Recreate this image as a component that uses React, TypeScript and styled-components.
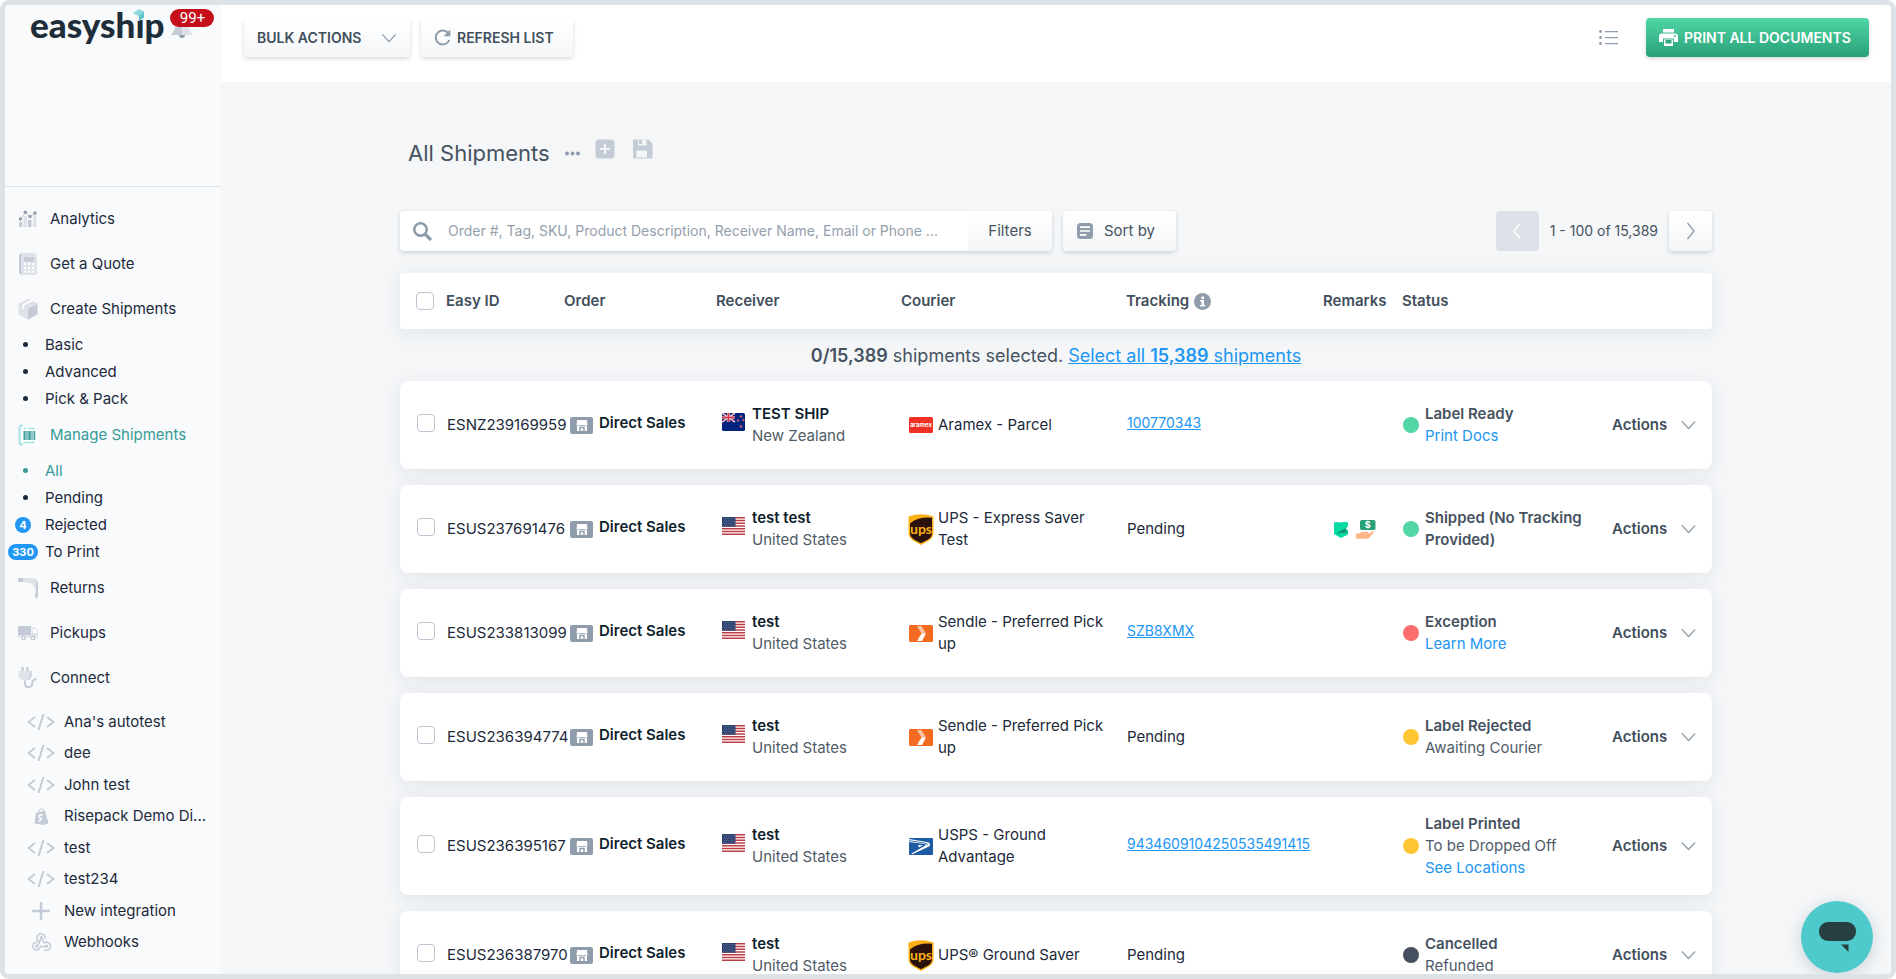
import React from "react";
import styled, { createGlobalStyle, css } from "styled-components";

const GlobalStyle = createGlobalStyle`
  *, *::before, *::after { box-sizing: border-box; }
  body {
    margin: 0;
    background: #ffffff;
    color: #1c2a3a;
    font-family: Inter, "Liberation Sans", sans-serif;
    font-size: 15px;
    line-height: 22px;
  }
  button, input { font: inherit; color: inherit; }
  a { color: inherit; text-decoration: none; }
  ul { list-style: none; margin: 0; padding: 0; }
  svg { display: block; flex: none; }
`;

/* ---------- shell ---------- */

const Frame = styled.div`
  position: relative;
  display: flex;
  height: 100vh;
  overflow: hidden;
  border: 5px solid #dde2e6;
  border-radius: 9px;
  background: #f4f6f8;
`;

const Sidebar = styled.aside`
  flex: none;
  width: 216px;
  background: #f9fafc;
`;

const Brand = styled.div`
  display: flex;
  gap: 7px;
  height: 75px;
  padding: 1px 0 0 25px;
`;

const LogoLink = styled.a`
  position: relative;
  height: 36px;
  color: #1d2d3a;
  font-family: Lato, sans-serif;
  font-size: 35px;
  font-weight: 900;
  line-height: 36px;

  svg {
    position: absolute;
    top: 3px;
    right: 19px;
  }
`;

const BellButton = styled.button`
  position: relative;
  width: 22px;
  height: 22px;
  margin-top: 12px;
  padding: 0;
  border: 0;
  background: none;
`;

const AlertCount = styled.span`
  position: absolute;
  top: -9px;
  left: -1px;
  width: 44px;
  height: 18px;
  border-radius: 9px;
  background: #c5101c;
  color: #ffffff;
  font-family: Roboto, sans-serif;
  font-size: 15px;
  line-height: 18px;
`;

const CompanyLogo = styled.div`
  width: 106px;
  height: 93px;
  margin: 0 0 13px 28px;
  background: #fafafa;
`;

const Nav = styled.nav`
  padding-top: 9px;
  border-top: 1px solid #dce1e6;
`;

const NavLink = styled.a<{ $active?: boolean }>`
  display: flex;
  align-items: center;
  gap: 12px;
  height: 45px;
  padding-left: 13px;
  color: ${(p) => (p.$active ? "#379a98" : "inherit")};
`;

const SubLink = styled.a<{ $active?: boolean }>`
  display: flex;
  align-items: center;
  gap: 4px;
  height: 27px;
  color: ${(p) => (p.$active ? "#379a98" : "inherit")};
`;

const Marker = styled.span`
  display: flex;
  justify-content: center;
  width: 36px;
`;

const Dot = styled.span`
  width: 5px;
  height: 5px;
  margin-left: 4px;
  border-radius: 50%;
  background: currentColor;
`;

const CountPill = styled.span`
  min-width: 16px;
  height: 16px;
  padding: 0 4px;
  border-radius: 8px;
  background: #2196f3;
  color: #ffffff;
  font-size: 11px;
  font-weight: 700;
  line-height: 16px;
  text-align: center;
`;

const Integrations = styled.ul`
  display: grid;
  grid-auto-rows: 1fr;
  height: 252px;
  margin-top: 6px;
`;

const IntegrationLink = styled.a`
  display: flex;
  align-items: center;
  gap: 9px;
  height: 100%;
  padding-left: 22px;
  white-space: nowrap;
`;

const IntegrationIcon = styled.span`
  display: flex;
  justify-content: center;
  width: 28px;
`;

const Page = styled.div`
  display: flex;
  flex: 1;
  flex-direction: column;
  min-width: 0;
`;

/* ---------- top bar ---------- */

const raised = css`
  border: 0;
  border-radius: 4px;
  background: linear-gradient(#ffffff, #f4f6f8);
  box-shadow: 0 2px 4px rgba(50, 75, 95, 0.2);
  cursor: pointer;
`;

const TopBar = styled.header`
  display: flex;
  flex: none;
  gap: 11px;
  height: 77px;
  padding: 13px 22px 0 23px;
  background: #ffffff;
`;

const BarButton = styled.button<{ $primary?: boolean; $between?: boolean }>`
  ${raised}
  display: flex;
  align-items: center;
  justify-content: ${(p) => (p.$between ? "space-between" : "flex-start")};
  gap: 6px;
  min-width: ${(p) => (p.$between ? "166px" : "152px")};
  height: 39px;
  padding: 0 13px;
  color: #424f5c;
  font-size: 14px;
  font-weight: 600;
  text-transform: uppercase;
  ${(p) =>
    p.$primary &&
    css`
      min-width: 223px;
      background: linear-gradient(#50d6a5, #2aa079);
      color: #ffffff;
    `}
`;

const Spacer = styled.div`
  flex: 1;
`;

const PlainButton = styled.button`
  display: flex;
  align-items: center;
  padding: 0;
  border: 0;
  background: none;
  cursor: pointer;
`;

const ListToggle = styled(PlainButton)`
  height: 38px;
  margin-right: 17px;
`;

/* ---------- content ---------- */

const Main = styled.main`
  width: 100%;
  max-width: 1312px;
  margin: 0 auto;
  padding-top: 55px;
`;

const TitleRow = styled.div`
  display: flex;
  align-items: center;
  gap: 15px;
  height: 32px;
  margin-bottom: 42px;
  padding-left: 8px;
`;

const Title = styled.h1`
  margin: 0;
  color: #465260;
  font-size: 22px;
  font-weight: 400;
  line-height: 32px;
`;

const ViewActions = styled.div`
  display: flex;
  gap: 18px;
  padding-bottom: 9px;
`;

const Tools = styled.div`
  display: flex;
  align-items: center;
  margin-bottom: 22px;
  color: #465260;
`;

const SearchGroup = styled.div`
  display: flex;
  flex: 0 1 652px;
  height: 40px;
  margin-right: 11px;
  border-radius: 4px;
  background: #ffffff;
  box-shadow: 0 2px 4px rgba(50, 75, 95, 0.2);
  overflow: hidden;
`;

const SearchField = styled.label`
  display: flex;
  flex: 1;
  align-items: center;
  gap: 16px;
  padding-left: 13px;
`;

const SearchInput = styled.input`
  flex: 1;
  min-width: 0;
  padding: 0;
  border: 0;
  outline: 0;
  background: none;
  font-size: 14px;

  &::placeholder {
    color: #93a0ac;
    opacity: 1;
  }
`;

const FilterButton = styled.button`
  width: 84px;
  border: 0;
  background: linear-gradient(#ffffff, #f4f6f8);
`;

const SortButton = styled.button`
  ${raised}
  display: flex;
  align-items: center;
  gap: 11px;
  width: 113px;
  height: 40px;
  padding: 0 14px;
`;

const PagerButton = styled.button<{ $off?: boolean }>`
  ${raised}
  display: flex;
  align-items: center;
  justify-content: center;
  width: 43px;
  height: 40px;
  padding: 0;
  color: #8e9cab;
  ${(p) =>
    p.$off &&
    css`
      background: #dee1e7;
      box-shadow: none;
      color: #ffffff;
    `}
`;

const PagerText = styled.span`
  padding: 0 11px;
  font-size: 14px;
`;

/* ---------- table ---------- */

const Table = styled.table`
  display: block;
`;

const TableHead = styled.thead`
  display: block;
`;

const TableBody = styled.tbody`
  display: flex;
  flex-direction: column;
  gap: 16px;
`;

const columns = [46, 118, 152, 185, 225, 197, 79, 210, 100]
  .map((n) => `minmax(0, ${n}fr)`)
  .join(" ");

const rowCard = css`
  display: grid;
  grid-template-columns: ${columns};
  align-items: center;
  background: #ffffff;
  box-shadow: 0 4px 18px rgba(50, 80, 100, 0.09);
`;

const HeadRow = styled.tr`
  ${rowCard}
  height: 56px;
  border-radius: 4px;
`;

const Row = styled.tr`
  ${rowCard}
  min-height: 88px;
  border-radius: 8px;
`;

const HeadCell = styled.th`
  display: flex;
  align-items: center;
  gap: 5px;
  padding: 0;
  color: #424f5c;
  font-weight: 600;
`;

const CheckHeadCell = styled.td`
  padding: 0 0 0 16px;
`;

const SelectionRow = styled.tr`
  display: block;
  margin-bottom: -16px;
`;

const SelectionCell = styled.td`
  display: block;
  padding: 16px 0 14px;
  color: #465260;
  font-size: 18px;
  text-align: center;

  b { font-weight: 600; }

  a {
    color: #2196f3;
    text-decoration: underline;
  }
`;

const Cell = styled.td<{ $inset?: number; $gap?: number; $lift?: boolean }>`
  display: flex;
  align-items: center;
  gap: ${(p) => p.$gap ?? 6}px;
  padding: 0 0 ${(p) => (p.$lift ? 4 : 0)}px ${(p) => p.$inset ?? 1}px;
  white-space: nowrap;
`;

const Strong = styled.span`
  color: #101f2e;
  font-weight: 600;
`;

const LiftedStrong = styled(Strong)`
  padding-bottom: 4px;
`;

const FlagSlot = styled.span`
  padding-bottom: 7px;
`;

const Lines = styled.div`
  display: flex;
  flex-direction: column;
  color: #4f5b68;
`;

const CourierName = styled.span`
  max-width: 170px;
  white-space: normal;
`;

const LogoSlot = styled.span`
  display: flex;
  justify-content: center;
  width: 24px;
`;

const StatusName = styled.span`
  max-width: 180px;
  color: #465260;
  font-weight: 600;
  white-space: normal;
`;

const StatusCell = styled(Cell)`
  padding-top: 16px;
  padding-bottom: 16px;
`;

const StatusDot = styled.span<{ $color: string }>`
  flex: none;
  width: 16px;
  height: 16px;
  border-radius: 50%;
  background: ${(p) => p.$color};
`;

const TextLink = styled.a<{ $underline?: boolean }>`
  color: #2196f3;
  text-decoration: ${(p) => (p.$underline ? "underline" : "none")};
`;

const TrackingLink = styled(TextLink)`
  font-size: 14px;
`;

const ActionsButton = styled(PlainButton)`
  justify-content: space-between;
  width: 100%;
  padding-right: 16px;
  color: #424f5c;
  font-weight: 600;
`;

const Checkbox = styled.input.attrs({ type: "checkbox" })`
  display: block;
  appearance: none;
  width: 18px;
  height: 18px;
  margin: 0;
  border: 1px solid #bcc7d3;
  border-radius: 4px;
  background: #ffffff;
`;

const ChatButton = styled.button`
  position: absolute;
  right: 18px;
  bottom: 1px;
  display: flex;
  align-items: center;
  justify-content: center;
  width: 72px;
  height: 72px;
  padding: 0;
  border: 0;
  border-radius: 50%;
  background: #4ecacd;
  box-shadow: 0 4px 16px rgba(30, 60, 80, 0.18);
`;

/* ---------- icons ---------- */

const Chevron = ({ dir = "down", w = 15 }: { dir?: "down" | "left" | "right"; w?: number }) => {
  const d = { down: "M1 1.500 8 9l7-7.500", left: "M8.500 1 2 9l6.500 8", right: "M1.500 1 8 9l-6.500 8" }[dir];
  return dir === "down" ? (
    <svg width={w} height={10} viewBox="0 0 16 10.500" fill="none" stroke="#8e9cab" strokeWidth="1.300"><path d={d} /></svg>
  ) : (
    <svg width="10" height="18" viewBox="0 0 10 18" fill="none" stroke="currentColor" strokeWidth="1.300"><path d={d} /></svg>
  );
};

const LogoCube = () => (
  <svg width="13" height="14" viewBox="0 0 13 14">
    <path fill="#f9fafc" d="M1 0h11v10l-11 3.500z" />
    <path fill="#8ed8dc" d="M1 4 7 0l5 2.500-5 4z" />
    <path fill="#5fc6cc" d="m7 6.500 5-4v6L7 12z" />
    <path fill="#a9e2e4" d="m1 4 6 2.500V8z" />
  </svg>
);

const Bell = () => (
  <svg width="22" height="22" viewBox="0 0 22 22">
    <path fill="#c3cbd6" d="M11 0C7 1 5 4 4.500 8.500 4 12 2 14 0 17h11z" />
    <path fill="#dde1e7" d="M11 0c4 1 6 4 6.500 8.500C18 12 20 14 22 17H11z" />
    <path fill="#8e9cab" d="M8 17h6c0 4-6 4-6 0z" />
  </svg>
);

const AnalyticsIcon = () => (
  <svg width="20" height="20" viewBox="0 0 20 20">
    <path fill="#c3cbd6" d="M1 13h3.500v5H1zM10 11h3.500v7H10z" />
    <path fill="#dfe2e8" d="M5.500 7H9v11H5.500zM15 6h3.500v12H15z" />
    <path stroke="#c3cbd6" fill="none" d="m2.500 10 5-6.500 4.500 4 5-3.500" />
    <g fill="#8e9cab"><circle cx="2.500" cy="10" r="1.700" /><circle cx="7.300" cy="3.300" r="1.700" /><circle cx="12" cy="7.500" r="1.700" /><circle cx="17" cy="4" r="1.700" /></g>
  </svg>
);

const QuoteIcon = () => (
  <svg width="20" height="22" viewBox="0 0 20 22">
    <rect x="1" y="0.500" width="17" height="21" rx="2.500" fill="#c3cbd6" />
    <rect x="3" y="0.500" width="16" height="21" rx="2.500" fill="#dfe2e8" />
    <path fill="#c3cbd6" d="M6 4h10v4.500H6z" />
    <path fill="#fff" d="M6 10h2.200v2H6zm4 0h2.200v2H10zm4 0h2.200v2H14zM6 14h2.200v2H6zm4 0h2.200v2H10zm4 0h2.200v2H14zM6 17.500h2.200v2H6zm4 0h2.200v2H10zm4 0h2.200v2H14z" />
  </svg>
);

const BoxIcon = () => (
  <svg width="20" height="22" viewBox="0 0 20 22">
    <path fill="#dfe2e8" d="m10 .5 9.500 5L10 10.500v11L.5 16.500v-11z" />
    <path fill="#c3cbd6" d="m10 10.500 9.500-5v11l-9.500 5z" />
    <path fill="none" stroke="#fff" strokeWidth="1.500" d="M13.500 2.500 5 7.300V11" />
  </svg>
);

const ManageIcon = () => (
  <svg width="20" height="22" viewBox="0 0 20 22">
    <rect x="3" y="0.500" width="17" height="21" rx="2.500" fill="#ffffff" />
    <path fill="none" stroke="#a5e3e5" strokeWidth="2" d="M5 1.500H3.500q-2 0-2 2v15q0 2 2 2H5" />
    <path stroke="#a5e3e5" strokeWidth="1.500" d="M5.500 4.500h3m1.500 0h7M5.500 18.500H17" />
    <path fill="#379a98" d="M5.500 7h2v9h-2zm2.800 0h1.200v9H8.300zm2 0h2.500v9h-2.500zm3.300 0h1v9h-1zm2 0h1.600v9h-1.600z" />
    <path fill="#7fc4c4" d="M7.500 7h.8v9h-.8zm2 0h.8v9h-.8zm3.300 0h.8v9h-.8z" />
  </svg>
);

const ReturnsIcon = () => (
  <svg width="20" height="20" viewBox="0 0 20 20">
    <path fill="#dfe2e8" d="M0 0h14q6 0 6 7v11q0 2-3 2 1-9-1.500-12.500T5 4H0z" />
    <path fill="#c3cbd6" d="M0 2q0-2 2-2h3v4H0zM18 1.500q2 2 2 6V18q0 2-3 2l.5-4.500h1z" />
  </svg>
);

const TruckIcon = () => (
  <svg width="20" height="16" viewBox="0 0 20 16">
    <path fill="#c3cbd6" d="M0 1h13v10H0z" />
    <path fill="#dfe2e8" d="M0 10h20v2.500H0zM13.500 2.500H17L20 6v5h-6.500z" />
    <path fill="#fff" d="M15 4h2l2 2.500V8h-4z" />
    <g fill="#fff" stroke="#c3cbd6" strokeWidth="1.500"><circle cx="5.500" cy="13" r="1.700" /><circle cx="15" cy="13" r="1.700" /></g>
  </svg>
);

const PlugIcon = () => (
  <svg width="20" height="22" viewBox="0 0 20 22">
    <path fill="#c3cbd6" d="M3.500 0h2.200v5H3.500zm4.800 0h2.200v5H8.300z" />
    <path fill="none" stroke="#c3cbd6" strokeWidth="2" d="M7 12v4.500q0 3.500 3.500 3.500t3.700-3.500q0-4 4.500-4.500" />
    <path fill="#dfe2e8" d="M.5 4h13v4q0 5-6.500 6Q.5 13 .5 8z" />
    <path fill="#c3cbd6" d="M12 4h1.500v4q0 4-3.500 5.300Q12 11 12 8z" />
  </svg>
);

const CodeIcon = () => (
  <svg width="28" height="18" viewBox="0 0 28 18" fill="none" stroke="#c3cbd6" strokeWidth="2">
    <path d="M8 4 1.500 9 8 14M20 4l6.500 5L20 14" /><path d="M16.500 1 11.500 17" />
  </svg>
);

const BagIcon = () => (
  <svg width="15" height="17" viewBox="0 0 15 17">
    <path fill="#c3cbd6" d="m2 4.500 9-1.500L14.500 15.500 9 17 .5 15.500z" />
    <path fill="none" stroke="#c3cbd6" d="M4.500 4.500Q5 .7 7.500.7T10 4" />
    <path fill="none" stroke="#fff" strokeWidth="1.400" d="M8.500 7Q5 6.300 5 8.300t2 2.200-2.500 3" />
  </svg>
);

const PlusIcon = () => (
  <svg width="18" height="18" viewBox="0 0 18 18" stroke="#c3cbd6" strokeWidth="2.500"><path d="M9 0v18M0 9h18" /></svg>
);

const WebhookIcon = () => (
  <svg width="19" height="18" viewBox="0 0 19 18" fill="none" stroke="#c3cbd6" strokeWidth="1.500">
    <path d="M6.800 8.300A4 4 0 1 1 12.800 6M9.300 5l3 5.200M9.300 5l-3.500 7.500" />
    <path d="M5.500 9.500A3.800 3.800 0 1 0 8.300 13.500H14M11.800 10.300A4 4 0 1 1 12 16.500" />
    <g fill="#c3cbd6" stroke="none"><circle cx="9.300" cy="4.500" r="1.600" /><circle cx="4.700" cy="13.200" r="1.600" /><circle cx="14.500" cy="13.200" r="1.600" /></g>
  </svg>
);

const RefreshIcon = () => (
  <svg width="17" height="17" viewBox="0 0 17 17">
    <path fill="none" stroke="#8e9cab" strokeWidth="2" d="M14.500 4.500A7 7 0 1 0 15.300 11" />
    <path fill="#8e9cab" d="M16.300.5v6.800H9.500z" />
  </svg>
);

const ListIcon = () => (
  <svg width="19" height="15" viewBox="0 0 19 15" fill="#8e9cab">
    <circle cx="1.500" cy="1.500" r="1.400" /><circle cx="1.500" cy="7.500" r="1.400" /><circle cx="1.500" cy="13.500" r="1.400" />
    <path d="M6 1h13v1.300H6zm0 6h13v1.300H6zm0 6h13v1.300H6z" />
  </svg>
);

const PrinterIcon = () => (
  <svg width="19" height="17" viewBox="0 0 19 17">
    <path fill="#fff" d="M4 0h11v3.500H4zM3 4.500h13q3 0 3 3V13h-4V9.500H4V13H0V7.500q0-3 3-3zM5 10.500h9V17H5z" />
    <path fill="#2fa880" d="M6.500 11h6v3.500h-6z" /><circle cx="16" cy="7" r="1" fill="#3bbd91" />
  </svg>
);

const DotsIcon = () => (
  <svg width="15" height="5" viewBox="0 0 15 5" fill="#8e9cab"><circle cx="2" cy="2.500" r="2" /><circle cx="7.500" cy="2.500" r="2" /><circle cx="13" cy="2.500" r="2" /></svg>
);

const AddIcon = () => (
  <svg width="20" height="20" viewBox="0 0 20 20"><rect x="0.500" y="0.500" width="19" height="19" rx="4" fill="#c3cbd6" /><path stroke="#fff" strokeWidth="1.700" d="M10 5v10M5 10h10" /></svg>
);

const SaveIcon = () => (
  <svg width="20" height="20" viewBox="0 0 20 20">
    <path fill="#c3cbd6" d="M0 1.500Q0 .5 1 .5h14.500L19.500 5v13.500q0 1-1 1H1q-1 0-1-1z" />
    <path fill="#f4f6f8" d="M5 .5h8.500v6H5zM3.500 11.500h10.500v7H3.500z" /><path fill="#c3cbd6" d="M6 .5h3v4.500H6z" />
  </svg>
);

const SearchIcon = () => (
  <svg width="19" height="19" viewBox="0 0 19 19" fill="none" stroke="#8a99a8"><circle cx="7.500" cy="7.500" r="6.200" strokeWidth="2.500" /><path strokeWidth="3.200" d="m12 12 6 6" /></svg>
);

const SortIcon = () => (
  <svg width="16" height="16" viewBox="0 0 16 16"><rect width="16" height="16" rx="3.500" fill="#8e9cab" /><path stroke="#fff" strokeWidth="1.700" d="M3 4.200h10M3 8h10M3 11.800h6.500" /></svg>
);

const InfoIcon = () => (
  <svg width="17" height="17" viewBox="0 0 17 17"><circle cx="8.500" cy="8.500" r="8.500" fill="#8e9cab" /><circle cx="8.700" cy="4.700" r="1.500" fill="#fff" /><path fill="#fff" d="M6 7h4v5h1.300v1.600H6V12h1.500V8.600H6z" /></svg>
);

const StoreIcon = () => (
  <svg width="23" height="17" viewBox="0 0 23 17">
    <rect width="23" height="17" rx="2" fill="#8f9cab" />
    <path fill="#fff" d="M7 3h10l.5 5.500H17V14H7V8.500h-.5z" />
    <path fill="#8f9cab" d="M7.500 8h9v.7h-9zM9.300 9.800h5.400V14h-1.400v-2.700h-2.600V14H9.300z" />
  </svg>
);

const FlagNZ = () => (
  <svg width="23" height="18" viewBox="0 0 23 18">
    <rect width="23" height="18" rx="1.500" fill="#00247d" />
    <path stroke="#f0b4bf" strokeWidth="1.800" d="m0 0 13 9M13 0 0 9" />
    <path stroke="#f3c4cc" strokeWidth="2.600" d="M6.500 0v9M0 4.500h13" /><path stroke="#d8344a" strokeWidth="1.400" d="M6.500 0v9M0 4.500h13" />
    <g fill="#d8344a" stroke="#e9a0ae" strokeWidth="0.400"><circle cx="19" cy="3.500" r="0.900" /><circle cx="16" cy="7.500" r="0.900" /><circle cx="21.500" cy="7" r="0.900" /><circle cx="19" cy="13.500" r="1.100" /></g>
  </svg>
);

const FlagUS = () => (
  <svg width="23" height="18" viewBox="0 0 23 18">
    <rect width="23" height="18" rx="1" fill="#fff" />
    <path stroke="#bd3d44" strokeWidth="1.400" d="M0 .7h23M0 3.500h23M0 6.200h23M0 9h23M0 11.800h23M0 14.500h23M0 17.300h23" />
    <path fill="#2b3f6f" d="M0 0h13.500v9.700H0z" />
    <path stroke="#8d9bbd" strokeWidth="0.700" strokeDasharray="0.800 1.400" d="M1 1.500h12M2 3.200h11M1 4.900h12M2 6.600h11M1 8.300h12" />
  </svg>
);

const AramexLogo = () => (
  <svg width="24" height="16" viewBox="0 0 24 16"><rect width="24" height="16" rx="1.500" fill="#ee3124" /><text x="12" y="10" fill="#fff" fontSize="6" fontWeight="700" textAnchor="middle" fontFamily="Inter, sans-serif">aramex</text></svg>
);

const UpsLogo = () => (
  <svg width="26" height="31" viewBox="0 0 26 31">
    <path fill="#fbb115" d="M.5 2.500Q13-2 25.500 2.500V19q0 5-4.500 7.500L13 31l-8-4.500Q.5 24 .5 19z" />
    <path fill="#2a110c" d="M2 9.500Q10 2.500 24 3.700V19q0 4.200-4 6.400L13 29.200l-7-3.800Q2 23 2 19z" />
    <text x="13" y="20" fill="#fbb115" fontSize="14" fontWeight="700" textAnchor="middle" fontFamily="Lato, sans-serif">ups</text>
  </svg>
);

const SendleLogo = () => (
  <svg width="24" height="17" viewBox="0 0 24 17"><rect width="24" height="17" rx="1.500" fill="#f26b21" /><path fill="#f9c3a2" d="M8 1h4.500l4.500 7.500h-4.500z" /><path fill="#fff" d="M12.500 8.500H17L13 16H8z" /></svg>
);

const UspsLogo = () => (
  <svg width="24" height="17" viewBox="0 0 24 17">
    <rect width="24" height="17" rx="1" fill="#1d5ba5" />
    <path fill="#fff" d="M0 1 17.500 4q5 .8 3 4.200L3 16.500l-.5-1L15.500 8q2.500-1.700 0-2L0 4z" />
    <path stroke="#1d5ba5" strokeWidth="0.800" fill="none" d="m0 2.600 16 2.600q3.500.6 2.300 2" />
    <path fill="#fff" d="m9 7 5 .3-4 2.200z" />
  </svg>
);

const ShieldIcon = () => (
  <svg width="14" height="17" viewBox="0 0 14 17">
    <path fill="#04dba4" d="M0 1.500 3 1l4 .5L11 .8l3 .7v12L7 17l-7-4z" />
    <path fill="#18946f" d="M14 6 2 12.500l12-1-2.500-2z" /><path fill="#fff" d="m14 5-2 2.500 2 2z" />
  </svg>
);

const MoneyHandIcon = () => (
  <svg width="20" height="19" viewBox="0 0 20 19">
    <rect x="4" width="15.500" height="10" rx="1.800" fill="#2aa079" />
    <text x="11.700" y="8.300" fill="#fff" fontSize="9" fontWeight="700" textAnchor="middle" fontFamily="Inter, sans-serif">$</text>
    <path fill="#ffb78a" d="M0 13.500h3q2-1.700 4.500-1.700h4.300q1.500.8 0 2.200l5-2.700q1.500.2.700 1.500l-4 5q-.7 1-2 1H0z" />
  </svg>
);

const ChatGlyph = () => (
  <svg width="37" height="30" viewBox="0 0 37 30" fill="#27403f"><rect width="37" height="19" rx="9" /><path d="M22 22.500h7.500V30z" /></svg>
);

/* ---------- data ---------- */

type Flag = "NZ" | "US";
type Courier = "aramex" | "ups" | "sendle" | "usps";

interface Shipment {
  id: string;
  receiver: string;
  flag: Flag;
  courier: Courier;
  service: string;
  tracking?: string;
  remarks?: boolean;
  color: string;
  status: string;
  note?: string;
  link?: string;
}

const shipments: Shipment[] = [
  { id: "ESNZ239169959", receiver: "TEST SHIP", flag: "NZ", courier: "aramex", service: "Aramex - Parcel", tracking: "100770343", color: "#52d6a4", status: "Label Ready", link: "Print Docs" },
  { id: "ESUS237691476", receiver: "test test", flag: "US", courier: "ups", service: "UPS - Express Saver Test", remarks: true, color: "#52d6a4", status: "Shipped (No Tracking Provided)" },
  { id: "ESUS233813099", receiver: "test", flag: "US", courier: "sendle", service: "Sendle - Preferred Pick up", tracking: "SZB8XMX", color: "#fd6f6f", status: "Exception", link: "Learn More" },
  { id: "ESUS236394774", receiver: "test", flag: "US", courier: "sendle", service: "Sendle - Preferred Pick up", color: "#ffc633", status: "Label Rejected", note: "Awaiting Courier" },
  { id: "ESUS236395167", receiver: "test", flag: "US", courier: "usps", service: "USPS - Ground Advantage", tracking: "9434609104250535491415", color: "#ffc633", status: "Label Printed", note: "To be Dropped Off", link: "See Locations" },
  { id: "ESUS236387970", receiver: "test", flag: "US", courier: "ups", service: "UPS® Ground Saver", color: "#454f5d", status: "Cancelled", note: "Refunded" },
];

const flags = { NZ: { Icon: FlagNZ, name: "New Zealand" }, US: { Icon: FlagUS, name: "United States" } };
const couriers = { aramex: AramexLogo, ups: UpsLogo, sendle: SendleLogo, usps: UspsLogo };

const integrations = [
  { name: "Ana's autotest", Icon: CodeIcon },
  { name: "dee", Icon: CodeIcon },
  { name: "John test", Icon: CodeIcon },
  { name: "Risepack Demo Di...", Icon: BagIcon },
  { name: "test", Icon: CodeIcon },
  { name: "test234", Icon: CodeIcon },
  { name: "New integration", Icon: PlusIcon },
  { name: "Webhooks", Icon: WebhookIcon },
];

const SubItem = ({ name, count, active }: { name: string; count?: number; active?: boolean }) => (
  <li>
    <SubLink href="#" $active={active}>
      <Marker>{count ? <CountPill>{count}</CountPill> : <Dot />}</Marker>
      {name}
    </SubLink>
  </li>
);

const ShipmentRow = ({ s }: { s: Shipment }) => {
  const { Icon: FlagIcon, name: country } = flags[s.flag];
  const CourierLogo = couriers[s.courier];
  return (
    <Row>
      <Cell $inset={17} $lift><Checkbox aria-label={`Select ${s.id}`} /></Cell>
      <Cell>{s.id}</Cell>
      <Cell $inset={6}><StoreIcon /><LiftedStrong>Direct Sales</LiftedStrong></Cell>
      <Cell $inset={6} $gap={7}>
        <FlagSlot><FlagIcon /></FlagSlot>
        <Lines><Strong>{s.receiver}</Strong><span>{country}</span></Lines>
      </Cell>
      <Cell $inset={8} $gap={5}><LogoSlot><CourierLogo /></LogoSlot><CourierName>{s.service}</CourierName></Cell>
      <Cell $lift={!!s.tracking}>{s.tracking ? <TrackingLink href="#" $underline>{s.tracking}</TrackingLink> : "Pending"}</Cell>
      <Cell $inset={11} $gap={8}>{s.remarks && <><ShieldIcon /><MoneyHandIcon /></>}</Cell>
      <StatusCell>
        <StatusDot $color={s.color} />
        <Lines>
          <StatusName>{s.status}</StatusName>
          {s.note && <span>{s.note}</span>}
          {s.link && <TextLink href="#">{s.link}</TextLink>}
        </Lines>
      </StatusCell>
      <Cell $inset={0}><ActionsButton>Actions<Chevron /></ActionsButton></Cell>
    </Row>
  );
};

export default function App() {
  return (
    <Frame>
      <GlobalStyle />
      <Sidebar>
        <Brand>
          <LogoLink href="#">easyship<LogoCube /></LogoLink>
          <BellButton aria-label="Notifications"><Bell /><AlertCount>99+</AlertCount></BellButton>
        </Brand>
        <CompanyLogo />
        <Nav>
          <NavLink href="#"><AnalyticsIcon />Analytics</NavLink>
          <NavLink href="#"><QuoteIcon />Get a Quote</NavLink>
          <NavLink href="#"><BoxIcon />Create Shipments</NavLink>
          <ul>
            <SubItem name="Basic" />
            <SubItem name="Advanced" />
            <SubItem name="Pick & Pack" />
          </ul>
          <NavLink href="#" $active><ManageIcon />Manage Shipments</NavLink>
          <ul>
            <SubItem name="All" active />
            <SubItem name="Pending" />
            <SubItem name="Rejected" count={4} />
            <SubItem name="To Print" count={330} />
          </ul>
          <NavLink href="#"><ReturnsIcon />Returns</NavLink>
          <NavLink href="#"><TruckIcon />Pickups</NavLink>
          <NavLink href="#"><PlugIcon />Connect</NavLink>
          <Integrations>
            {integrations.map(({ name, Icon }) => (
              <li key={name}>
                <IntegrationLink href="#"><IntegrationIcon><Icon /></IntegrationIcon>{name}</IntegrationLink>
              </li>
            ))}
          </Integrations>
        </Nav>
      </Sidebar>

      <Page>
        <TopBar>
          <BarButton $between>Bulk Actions<Chevron w={16} /></BarButton>
          <BarButton><RefreshIcon />Refresh List</BarButton>
          <Spacer />
          <ListToggle aria-label="List view"><ListIcon /></ListToggle>
          <BarButton $primary><PrinterIcon />Print All Documents</BarButton>
        </TopBar>

        <Main>
          <TitleRow>
            <Title>All Shipments</Title>
            <PlainButton aria-label="More"><DotsIcon /></PlainButton>
            <ViewActions>
              <PlainButton aria-label="Add view"><AddIcon /></PlainButton>
              <PlainButton aria-label="Save view"><SaveIcon /></PlainButton>
            </ViewActions>
          </TitleRow>

          <Tools>
            <SearchGroup>
              <SearchField>
                <SearchIcon />
                <SearchInput aria-label="Search shipments" placeholder="Order #, Tag, SKU, Product Description, Receiver Name, Email or Phone ..." />
              </SearchField>
              <FilterButton>Filters</FilterButton>
            </SearchGroup>
            <SortButton><SortIcon />Sort by</SortButton>
            <Spacer />
            <PagerButton $off disabled aria-label="Previous page"><Chevron dir="left" /></PagerButton>
            <PagerText>1 - 100 of 15,389</PagerText>
            <PagerButton aria-label="Next page"><Chevron dir="right" /></PagerButton>
          </Tools>

          <Table>
            <TableHead>
              <HeadRow>
                <CheckHeadCell><Checkbox aria-label="Select page" /></CheckHeadCell>
                <HeadCell>Easy ID</HeadCell>
                <HeadCell>Order</HeadCell>
                <HeadCell>Receiver</HeadCell>
                <HeadCell>Courier</HeadCell>
                <HeadCell>Tracking <InfoIcon /></HeadCell>
                <HeadCell>Remarks</HeadCell>
                <HeadCell>Status</HeadCell>
              </HeadRow>
            </TableHead>
            <TableBody>
              <SelectionRow>
                <SelectionCell colSpan={9}>
                  <b>0/15,389</b> shipments selected. <a href="#">Select all <b>15,389</b> shipments</a>
                </SelectionCell>
              </SelectionRow>
              {shipments.map((s) => <ShipmentRow key={s.id} s={s} />)}
            </TableBody>
          </Table>
        </Main>
      </Page>

      <ChatButton aria-label="Open chat"><ChatGlyph /></ChatButton>
    </Frame>
  );
}
